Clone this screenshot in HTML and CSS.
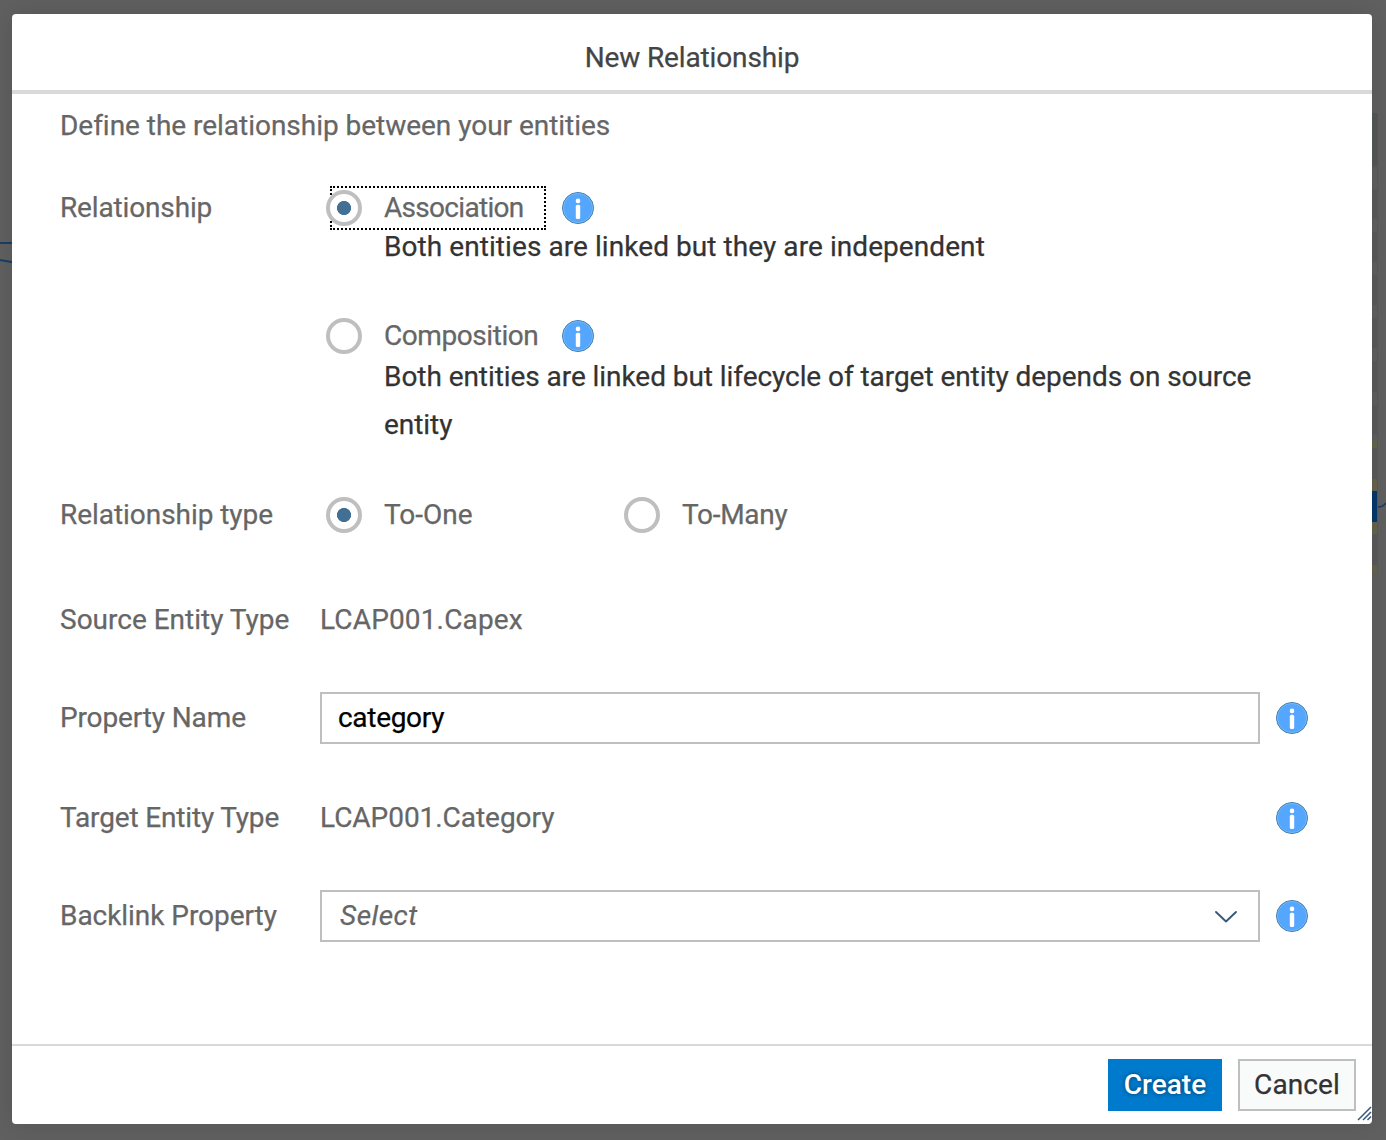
FILE: index.html
```html
<!DOCTYPE html>
<html lang="en">
<head>
<meta charset="utf-8">
<title>New Relationship</title>
<link rel="stylesheet" href="styles.css">
</head>
<body>
<svg class="backdrop" width="1386" height="1140" viewBox="0 0 1386 1140" aria-hidden="true">
  <path d="M0 243H14M0 260L14 262.500" fill="none" stroke="#173f66" stroke-width="2"/>
  <path d="M1370 113H1378V573H1370Z" fill="#5a5a5a"/>
  <path d="M1370 113H1378V165H1370Z" fill="#555858"/>
  <path d="M1370 167h7v22h-7zM1370 219h7v13h-7zM1370 262h7v13h-7zM1370 305h7v13h-7zM1370 348h7v13h-7zM1370 392h7v13h-7zM1370 435h7v7h-7z" fill="#606060"/>
  <path d="M1370 442h7v6h-7zM1370 479h7v12h-7zM1370 522h7v12h-7zM1370 565h7v8h-7z" fill="#66644d"/>
  <path d="M1370 491h7v31h-7z" fill="#06396b"/>
  <path d="M1378 507Q1383 507 1386 503" fill="none" stroke="#173f66" stroke-width="1.500"/>
</svg>
<svg class="symbols" width="0" height="0" aria-hidden="true">
  <symbol id="info" viewBox="0 0 32 32">
    <circle cx="16" cy="16" r="15.500" fill="#55a6ff" stroke="#427cac"/>
    <circle cx="16" cy="16" r="14.600" fill="none" stroke="#7fc0e8" stroke-width=".7"/>
    <circle cx="16" cy="8.900" r="2.300" fill="#fff"/>
    <rect x="13.800" y="12.700" width="4.400" height="14.300" rx="1.600" fill="#fff"/>
  </symbol>
</svg>
<main class="dialog" role="dialog">
  <header class="header"><h1 class="t-title">New Relationship</h1></header>
  <form class="body">
    <p class="intro t-intro">Define the relationship between your entities</p>
    <div class="row relationship">
      <span class="label t-rel">Relationship</span>
      <div class="options">
        <div class="line">
          <div class="radio focused"><i class="dot on"></i><span class="t-assoc">Association</span></div>
          <svg class="info"><use href="#info"/></svg>
        </div>
        <p class="desc first t-desc1">Both entities are linked but they are independent</p>
        <div class="line second">
          <div class="radio"><i class="dot"></i><span class="t-comp">Composition</span></div>
          <svg class="info"><use href="#info"/></svg>
        </div>
        <p class="desc t-desc2">Both entities are linked but lifecycle of target entity depends on source<br>entity</p>
      </div>
    </div>
    <div class="row type">
      <span class="label t-type">Relationship type</span>
      <div class="line">
        <div class="radio one"><i class="dot on"></i><span class="t-one">To-One</span></div>
        <div class="radio"><i class="dot"></i><span class="t-many">To-Many</span></div>
      </div>
    </div>
    <div class="row source">
      <span class="label t-source">Source Entity Type</span>
      <span class="value t-capex">LCAP001.Capex</span>
    </div>
    <div class="row property">
      <span class="label t-prop">Property Name</span>
      <div class="field"><span class="t-cat">category</span></div>
      <svg class="info"><use href="#info"/></svg>
    </div>
    <div class="row target">
      <span class="label t-target">Target Entity Type</span>
      <span class="value t-lcat">LCAP001.Category</span>
      <svg class="info"><use href="#info"/></svg>
    </div>
    <div class="row backlink">
      <span class="label t-back">Backlink Property</span>
      <div class="field select"><span class="t-select">Select</span>
        <svg width="24" height="16" viewBox="0 0 24 16"><path d="M2 4L12 13.500L22 4" fill="none" stroke="#36587c" stroke-width="1.900" stroke-linecap="round" stroke-linejoin="round"/></svg>
      </div>
      <svg class="info"><use href="#info"/></svg>
    </div>
  </form>
  <footer class="footer">
    <button class="btn primary"><span class="t-create">Create</span></button>
    <button class="btn"><span class="t-cancel">Cancel</span></button>
  </footer>
  <svg class="grip" width="15" height="15" viewBox="0 0 15 15"><path d="M1 14L14 1M6 14L14 6M10.500 14L14 10.500" stroke="#36587c" stroke-width="1.500" fill="none"/></svg>
</main>
</body>
</html>
```
FILE: styles.css
```css
* { box-sizing: border-box; }
body {
  margin: 0;
  height: 1140px;
  padding: 14px 14px 16px 12px;
  background: #606060;
  font: 28px/44px Roboto, "Liberation Sans", sans-serif;
  color: #666;
  -webkit-text-stroke: .25px;
  overflow: hidden;
}
h1, p { margin: 0; font: inherit; }
span, p, h1 { white-space: nowrap; }
.backdrop { position: absolute; left: 0; top: 0; }
.symbols { position: absolute; }
.dialog {
  position: relative;
  display: flex;
  flex-direction: column;
  height: 1110px;
  border-radius: 4px;
  background: #fff;
  box-shadow: 0 0 24px rgba(0, 0, 0, .13);
}
.header {
  height: 80px;
  padding-top: 22px;
  border-bottom: 4px solid #d9d9d9;
  text-align: center;
  color: #444;
}
.body { flex: 1; padding: 10px 64px 0 48px; }
.row { display: flex; align-items: center; }
.label { width: 260px; flex: none; }
.relationship { align-items: flex-start; margin-top: 38px; }
.line { display: flex; align-items: center; height: 44px; }
.radio { display: flex; align-items: center; height: 44px; padding-left: 6px; }
.dot {
  width: 36px;
  height: 36px;
  flex: none;
  margin-right: 22px;
  border: 4px solid #bfbfbf;
  border-radius: 50%;
  background: #fff;
}
.dot.on { background: radial-gradient(circle, #427094 6.700px, #fff 7.400px); }
.options .radio { width: 226px; margin-right: 16px; }
.options .line:not(.second) .radio {
  width: 216px;
  margin-left: 10px;
  padding: 0;
  border: 2px dotted #000;
}
.focused .dot { margin-left: -6px; }
.info { width: 32px; height: 32px; flex: none; }
.desc { margin-top: -5px; padding-left: 64px; line-height: 48px; color: #333; }
.desc.first { margin-top: -7px; }
.second { margin-top: 43px; }
.type { margin-top: 44px; }
.one { width: 298px; }
.source { margin-top: 61px; }
.property { margin-top: 50px; }
.target { margin-top: 52px; }
.backlink { margin-top: 50px; }
.value { flex: 1; }
.field {
  display: flex;
  align-items: center;
  width: 940px;
  height: 52px;
  margin-right: 16px;
  padding: 0 20px 0 16px;
  border: 2px solid #bfbfbf;
  color: #000;
}
.select { justify-content: space-between; padding-left: 18px; color: #666; font-style: italic; }

/* tracking per text */
.t-title { letter-spacing: -.13px; }
.t-intro { letter-spacing: -.03px; }
.t-rel { letter-spacing: -.15px; }
.t-assoc { letter-spacing: -.7px; }
.t-desc1 { letter-spacing: .07px; }
.t-comp { letter-spacing: -.43px; }
.t-desc2 { letter-spacing: -.06px; }
.t-type { letter-spacing: -.05px; }
.t-many { letter-spacing: -.3px; }
.t-capex { letter-spacing: .15px; }
.t-prop { letter-spacing: -.13px; }
.t-cat { letter-spacing: -.3px; }
.t-target { letter-spacing: -.16px; }
.t-lcat { letter-spacing: -.04px; }
.t-back { letter-spacing: -.05px; }
.t-select { letter-spacing: .5px; }
.t-cancel { letter-spacing: .1px; }

.footer {
  display: flex;
  justify-content: flex-end;
  gap: 16px;
  height: 80px;
  padding: 13px 16px 0 0;
  border-top: 2px solid #d9d9d9;
}
.btn {
  width: 118px;
  height: 52px;
  padding: 0;
  border: 2px solid #bfbfbf;
  background: #f9fafa;
  color: #333;
  font: inherit;
}
.primary {
  width: 114px;
  border-color: #007acc;
  background: #007acc;
  color: #fff;
  font-weight: 500;
  text-shadow: 0 0 4px rgba(0, 0, 0, .5);
  -webkit-text-stroke: 0;
}
.grip { position: absolute; right: 0; bottom: 3px; }
```
